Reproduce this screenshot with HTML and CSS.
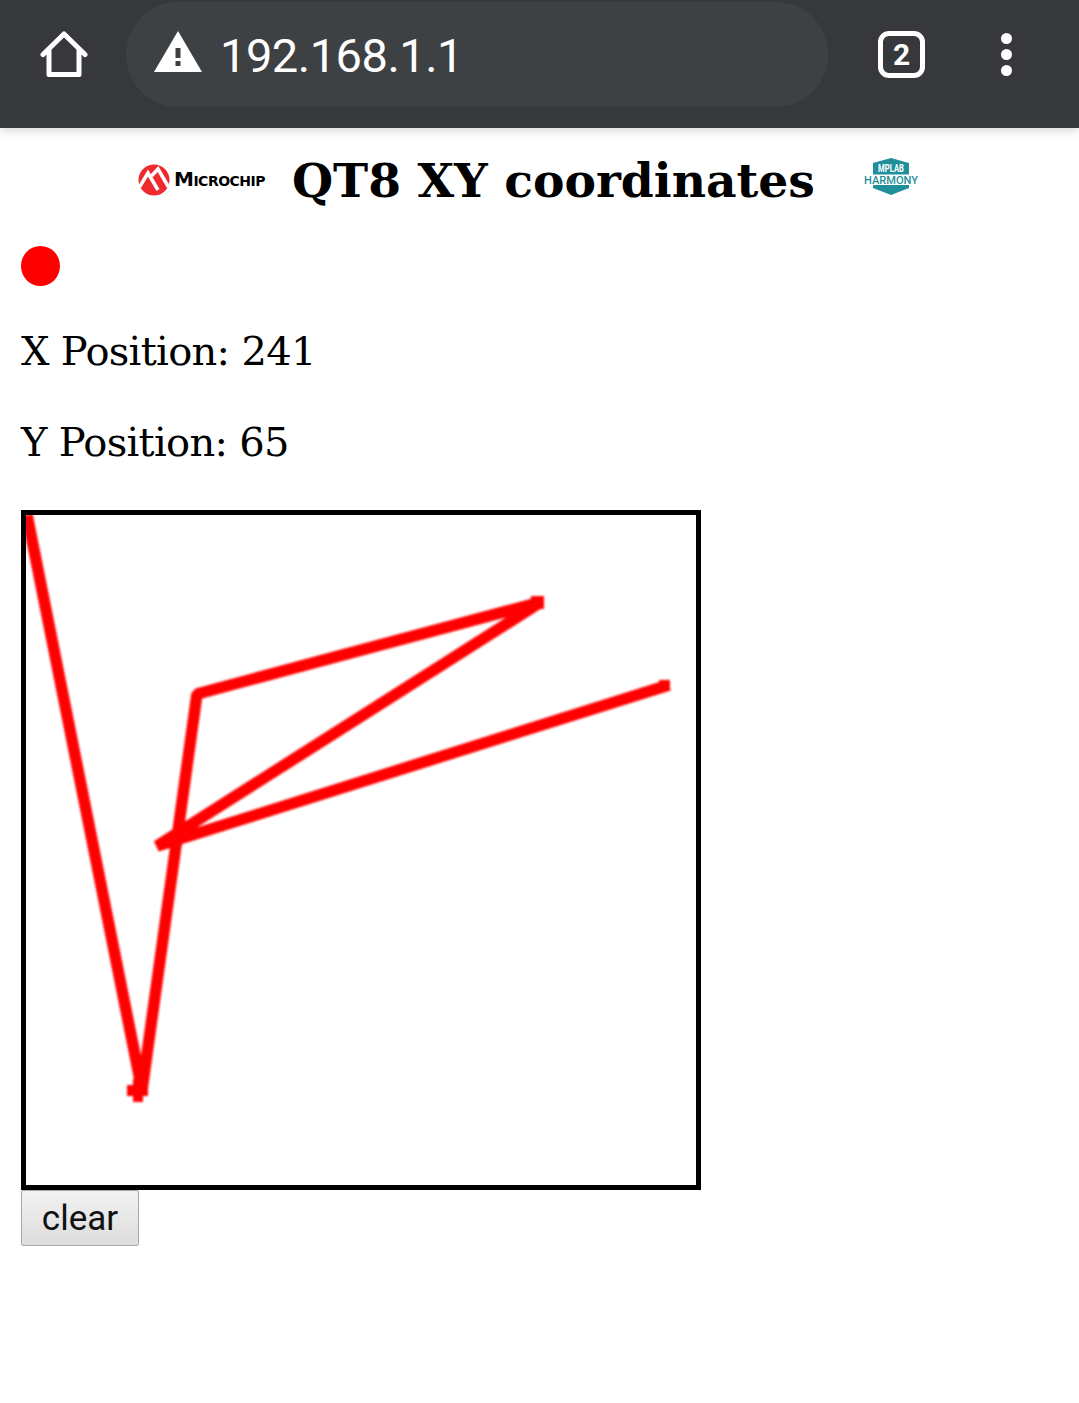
FILE: index.html
```html
<!DOCTYPE html>
<html lang="en">

<head>
    <meta charset="UTF-8">
    <meta name="viewport" content="width=device-width, initial-scale=1.0">
    <title>QT8 XY coordinates</title>
    <link rel="stylesheet" href="styles.css">
</head>

<body>
    <!-- browser toolbar -->
    <div class="toolbar">
        <svg class="home-icon" width="48" height="48" viewBox="0 0 48 48">
            <path d="M3 23.5 L24 3 L45 23.5 M9 19 V43.5 H39 V19" fill="none" stroke="#fff" stroke-width="5" stroke-linecap="round" stroke-linejoin="round" />
        </svg>
        <div class="address">
            <svg class="warn-icon" width="48" height="42" viewBox="0 0 48 42">
                <path d="M24 0 L48 41 H0 Z" fill="#fff" />
                <rect x="21.5" y="17" width="5" height="10" fill="#3e4144" />
                <rect x="21.5" y="30" width="5" height="5" fill="#3e4144" />
            </svg>
            <span class="url">192.168.1.1</span>
        </div>
        <div class="tabs">2</div>
        <div class="menu">
            <i></i>
            <i></i>
            <i></i>
        </div>
    </div>

    <div class="page">
        <div class="head">
            <div class="mchp-logo">
                <svg width="33" height="32" viewBox="0 0 33 32">
                    <circle cx="16" cy="16" r="15.5" fill="#ee2a2e" />
                    <path d="M1.5 23 L10 9 L20 26" fill="none" stroke="#fff" stroke-width="3.5" />
                    <path d="M13.5 12 L20 5 L30.5 23" fill="none" stroke="#fff" stroke-width="3.5" />
                </svg>
                <span class="mchp-name">Microchip</span>
            </div>
            <h1 class="title">QT8 XY coordinates</h1>
            <svg class="harmony-logo" width="56" height="38" viewBox="0 0 56 38">
                <path d="M10 5 L28 0 L46 5 V16.5 H10 Z" fill="#1f8f9a" />
                <path d="M10 27 H46 V30 L28 37 L10 30 Z" fill="#1f8f9a" />
                <text class="harmony-top" x="28" y="14" text-anchor="middle" textLength="26" lengthAdjust="spacingAndGlyphs">MPLAB</text>
                <text class="harmony-bottom" x="28" y="25.5" text-anchor="middle" textLength="54" lengthAdjust="spacingAndGlyphs">HARMONY</text>
            </svg>
        </div>

        <div class="led"></div>
        <p class="pos">X Position: 241</p>
        <p class="pos">Y Position: 65</p>

        <svg class="board" width="680" height="680" viewBox="0 0 670 670">
            <filter id="soft" filterUnits="userSpaceOnUse" x="0" y="0" width="670" height="670">
                <feGaussianBlur stdDeviation="0.8" />
            </filter>
            <!-- touch trace, in board coordinates -->
            <g filter="url(#soft)" fill="#f00">
                <polyline points="1,0 116,575 171,179 515,87 131,331 643,170" fill="none" stroke="#f00" stroke-width="11.5" stroke-linejoin="bevel" />
                <path d="M101 570 H107 V564 H117 V570 H122 V581 H117 V587 H107 V581 H101 Z" />
                <rect x="505" y="81" width="13" height="13" />
                <rect x="633" y="165" width="11" height="11" />
            </g>
        </svg>
        <button class="clear">clear</button>
    </div>
</body>

</html>
```

FILE: styles.css
```css
* {
    margin: 0;
    padding: 0;
    box-sizing: border-box;
}

body {
    background: #fff;
    color: #000;
    font-family: "DejaVu Serif", serif;
}

.toolbar {
    display: flex;
    align-items: center;
    height: 128px;
    padding: 2px 0 21px 40px;
    background: #37383c;
    box-shadow: 0 2px 10px rgba(0, 0, 0, 0.18);
}

.address {
    display: flex;
    align-items: center;
    width: 702px;
    height: 105px;
    margin-left: 38px;
    padding-left: 28px;
    background: #3e4144;
    border-radius: 52px;
}

.warn-icon {
    margin-top: -6px;
}

.url {
    margin: 2px 0 0 18px;
    color: #fff;
    font-family: Roboto, sans-serif;
    font-size: 47px;
    letter-spacing: -0.5px;
}

.tabs {
    width: 47px;
    height: 47px;
    margin-left: 50px;
    border: 5px solid #fff;
    border-radius: 11px;
    color: #fff;
    font-family: "Liberation Sans Narrow", Roboto, sans-serif;
    font-size: 30px;
    font-weight: 700;
    line-height: 37px;
    text-align: center;
}

.menu {
    display: flex;
    flex-direction: column;
    gap: 5px;
    margin-left: 76px;
}

.menu i {
    display: block;
    width: 11px;
    height: 11px;
    border-radius: 50%;
    background: #fff;
}

.page {
    padding: 0 21px;
}

.head {
    display: flex;
    align-items: center;
    height: 104px;
    padding-left: 117px;
}

.mchp-logo {
    display: flex;
    align-items: center;
    width: 154px;
    gap: 3px;
}

.mchp-name {
    margin-top: -3px;
    font-family: "DejaVu Sans", sans-serif;
    font-size: 20px;
    font-weight: 700;
    font-variant: small-caps;
    letter-spacing: -0.5px;
}

.title {
    width: 571px;
    font-size: 47.2px;
    font-weight: 700;
    white-space: nowrap;
}

.harmony-logo {
    margin-top: -6px;
}

.harmony-top {
    fill: #fff;
    font-family: Roboto, sans-serif;
    font-size: 11px;
    font-weight: 700;
}

.harmony-bottom {
    fill: #1f8f9a;
    font-family: Roboto, sans-serif;
    font-size: 10px;
    font-weight: 500;
}

.led {
    width: 39px;
    height: 40px;
    margin-top: 14px;
    border-radius: 50%;
    background: #f00;
}

.pos {
    height: 91px;
    font-size: 40px;
    letter-spacing: -0.7px;
    line-height: 91px;
}

.pos:first-of-type {
    margin-top: 20px;
}

.board {
    display: block;
    width: 680px;
    height: 680px;
    margin-top: 22px;
    border: 5px solid #000;
    background: #fff;
}

.clear {
    display: block;
    width: 118px;
    height: 56px;
    border: 1px solid #a9a9a9;
    border-radius: 2px;
    background: linear-gradient(#f2f2f2, #dcdcdc);
    color: #111;
    font-family: Roboto, sans-serif;
    font-size: 35px;
}
```
